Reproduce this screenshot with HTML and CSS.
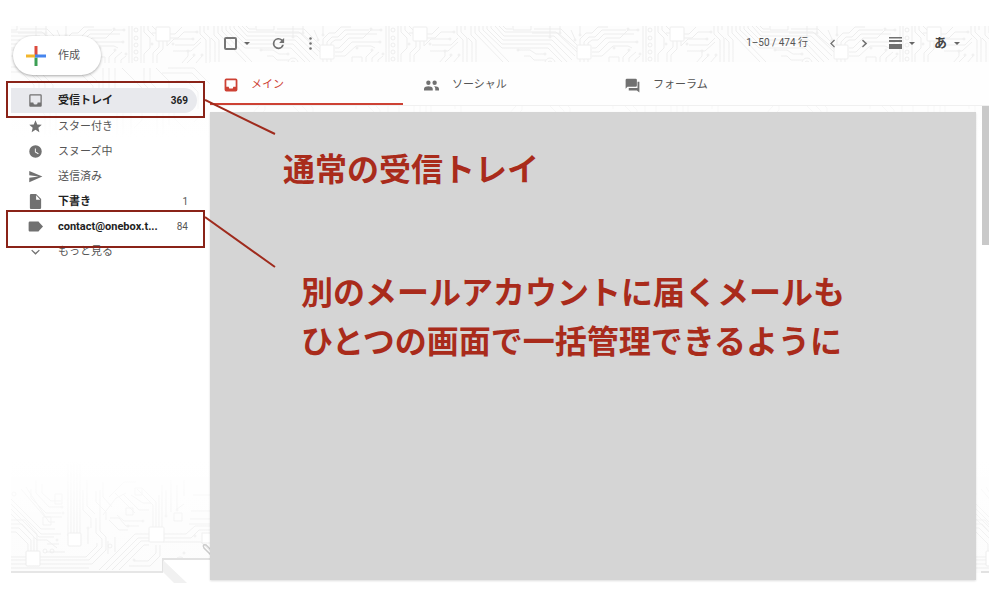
FILE: index.html
```
<!DOCTYPE html>
<html lang="ja">
<head>
<meta charset="utf-8">
<meta name="viewport" content="width=device-width, initial-scale=1">
<title>受信トレイ</title>
<link rel="stylesheet" href="styles.css">
</head>
<body>
<div class="app">
  <svg class="circuit circuit-top" aria-hidden="true">
    <defs>
      <pattern id="board" x="-57" y="0" width="257" height="112" patternUnits="userSpaceOnUse">
        <g fill="none" stroke="#ededed">
          <path d="M0 12 4 16V37M3 0V9L8 14V37M7 0V7L36 37M11 0V5L42 37M15 0V4L34 22H80L94 36M19 0V3L34 18H82L100 37M23 0V2L35 14H84L104 34M27 0 36 10H86L107 30M31 0 37 6H88L109 26M35 0 38 3H44M64 7H90L109 23M66 3H93L109 19"/>
          <path d="M112 19V13L118 7H124L130 1H140M116 19V16L121 11H127L134 4H158M120 19V17L124 14H130L136 8H166M124 22H128L138 12H152L160 4H169M124 26H131L141 16H168M124 30H134L145 20H160L164 22M112 33V37M116 33V37M120 33V37"/>
          <path d="M155 37V31L161 25M161 37V32L168 26M167 37V34L172 30M82 0V10M92 0V6M103 4 107 13M112 0V8M50 24H62L68 28H76M56 30H62L66 34H78"/>
          <path d="M175 0V37M178 0V37M187 0V37M190 0V6L196 12V22L190 28V37M194 0V4L200 10M198 0 202 4M202 7H198M209 15V23L203 29V37M213 15V20L220 13H238M216 12H224L230 6H242M216 8H221L228 1M205 15V21L199 27V37M221 19H240L247 12M219 25H237L247 16M228 37 234 30V26M233 37 240 30M242 37 248 30M246 0V8L252 14V37M250 0V6L256 12V37M254 0V4"/>
          <path d="M0 41H40L54 55V84L44 94V112M4 46H38L48 56V80L39 90V112M44 41H70L85 56V74L96 85V112M48 46H67L80 59V78L91 89V112M75 42 91 58V71L102 82V112M82 42 99 59V70L108 79M88 42H130L145 57V83M94 47H126L139 60V76M149 42V72L163 86V112M155 42V70L169 84V112M161 42V64L177 80V112M168 42 188 62V94L180 102M190 42V58L203 71V112M196 42V56L209 69V112M202 42 215 55V99M214 42H240L257 59M208 47H238L250 59V86L240 96M222 55H233L244 66V83M220 64V92L232 104"/>
          <g>
            <circle cx="82" cy="11" r="1"/><circle cx="92" cy="7" r="1"/><circle cx="107" cy="14" r="1"/><circle cx="112" cy="9" r="1"/><circle cx="77" cy="28" r="1"/><circle cx="50" cy="24" r="1"/><circle cx="160" cy="3" r="1"/><circle cx="170" cy="4" r="1"/><circle cx="169" cy="16" r="1"/><circle cx="146" cy="22" r="1"/><circle cx="161" cy="24" r="1"/><circle cx="172" cy="28" r="1"/><circle cx="198" cy="18" r="1"/><circle cx="219" cy="18" r="1"/><circle cx="239" cy="13" r="1"/><circle cx="243" cy="6" r="1"/><circle cx="234" cy="25" r="1"/><circle cx="240" cy="29" r="1"/><circle cx="248" cy="29" r="1"/>
            <circle cx="182" cy="4" r="2"/><circle cx="182" cy="12" r="2"/><circle cx="182" cy="19" r="2"/><circle cx="182" cy="26" r="2"/><circle cx="182" cy="33" r="2"/><circle cx="82" cy="37" r="5"/><circle cx="82" cy="37" r="2"/>
          </g>
          <path d="M45 0V4H63V0M141 37V31H151V37"/>
        </g>
        <g fill="#fff" stroke="#eee"><rect x="109" y="19" width="14" height="14" rx="1"/><rect x="202" y="1" width="14" height="14" rx="1"/></g>
      </pattern>
      <linearGradient id="fadeDown" x2="0" y2="1"><stop offset="0" stop-color="#fff" stop-opacity="0"/><stop offset=".4" stop-color="#fff" stop-opacity=".1"/><stop offset="1" stop-color="#fff"/></linearGradient>
    </defs>
    <rect width="100%" height="112" fill="#fdfdfd"/>
    <rect width="100%" height="112" fill="url(#board)"/>
    <rect width="100%" height="112" fill="url(#fadeDown)"/>
  </svg>
  <svg class="circuit circuit-bottom" aria-hidden="true">
    <defs>
      <linearGradient id="fadeUp" x2="0" y2="1"><stop offset="0" stop-color="#fff"/><stop offset=".65" stop-color="#fff" stop-opacity=".3"/><stop offset="1" stop-color="#fff" stop-opacity=".1"/></linearGradient>
      <pattern id="lower" width="960" height="120" patternUnits="userSpaceOnUse">
        <g fill="none" stroke="#ebebeb">
          <path d="M0 39 30 69H44M0 44 30 74H50M0 49 28 77H43M0 54 26 80H36L46 88M0 72H5L17 84V94M0 68H8L20 80V94M0 64H11L23 77V94M0 60H14L26 74V94M29 100H78L91 87V79L85 73V58M29 104H81L95 90V77L89 71V30M29 97H75L86 86V83M0 97H15M0 100H15M0 104H15M0 108H78M57 0V76M60 0V76M63 0V76M66 0V76M69 0V76M72 30V50L80 58V68M76 20V46L84 54"/>
          <path d="M138 74H124L88 110M138 78H127L95 110M138 81H130L101 110M138 85H133L108 110M142 70V45L126 29M145 70V42L131 28M148 70V35M151 70V25M152 74H175L184 66H199M152 78H180L188 70H199M152 82H190L199 91M145 85V93L137 101H123M149 85V96L139 106H118M20 29V38L35 53H50M25 20V33L38 47H50M31 24V33L40 41H50M10 29 34 57H51M15 27 38 62H44"/>
          <path d="M85 31V42L95 52V60M92 22V37L101 47M98 37 113 22H125M92 55 105 38 115 33M99 58H108L115 66H128M106 55 113 61H132M104 33 124 53M112 34 128 50H138M120 35 132 43H140M117 70H108L98 60M155 30V55M160 20V52M166 25V49L173 44M173 20V36M178 64H199M179 59H199M180 51H199M182 35H199M36 84H48M35 92H54M77 69V84M97 81V94M104 77V92"/>
          <circle cx="3" cy="34" r="2"/><circle cx="34" cy="91" r="2"/><circle cx="41" cy="91" r="2"/><circle cx="99" cy="86" r="2"/><circle cx="52" cy="53" r="1"/><circle cx="51" cy="47" r="1"/><circle cx="46" cy="80" r="1"/><circle cx="77" cy="68" r="1"/><circle cx="117" cy="66" r="1"/><circle cx="132" cy="61" r="1"/><circle cx="123" cy="100" r="1"/><circle cx="155" cy="56" r="1"/><circle cx="166" cy="50" r="1"/><circle cx="184" cy="76" r="1"/><circle cx="173" cy="93" r="1"/><circle cx="169" cy="102" r="5"/><circle cx="169" cy="102" r="2"/>
          <path d="M44 34h7v10h-7zM32 57h8v8h-8zM115 48h7v7h-7zM124 28h7v7h-7zM163 53h8v8h-8z"/>
        </g>
        <g fill="#fff" stroke="#eaeaea"><rect x="15" y="91" width="14" height="15" rx="1"/><rect x="57" y="73" width="13" height="13" rx="1"/><rect x="138" y="67" width="15" height="15" rx="1"/><rect x="191" y="73" width="14" height="10"/></g>
      </pattern>
    </defs>
    <rect width="100%" height="113" fill="#fcfcfc"/>
    <rect width="100%" height="113" fill="url(#lower)"/>
    <rect width="100%" height="113" fill="url(#fadeUp)"/>
    <path d="M0 112H152" stroke="#e6e6e6" stroke-width="2"/>
    <path d="M152 99H840V124H152z" fill="#fff"/>
    <path d="M152 112V99H200M970 112H980" fill="none" stroke="#e2e2e2" stroke-width="2"/>
    <path d="M152 100 176 123H163L152 112z" fill="#f1f1f1"/>
    <path d="M201 96 193 88Q191 84 195 85L203 93" fill="none" stroke="#ccc" stroke-width="1.500"/>
  </svg>

  <aside class="sidebar">
    <button class="compose" type="button">
      <svg width="20" height="20" viewBox="0 0 20 20" aria-hidden="true"><path fill="#dc4b3e" d="M8.500 0h3v9h-3z"/><path fill="#f2b62d" d="M0 8.500h9v3H0z"/><path fill="#4685ee" d="M11.500 8.500H20v3h-8.500z"/><path fill="#3c9f55" d="M8.500 11.500h3V20h-3z"/><path fill="#4685ee" d="M9 8.500h3v3H9z"/></svg>
      <span>作成</span>
    </button>
    <nav class="folders">
      <a class="folder selected" href="#"><svg class="icon" viewBox="0 0 24 24"><path d="M20 2H4a2 2 0 0 0-2 2v16c0 1.100.9 2 2 2h16a2 2 0 0 0 2-2V4a2 2 0 0 0-2-2zm0 13h-4.500a3.500 3.500 0 0 1-7 0H4V4h16z"/></svg><span class="name">受信トレイ</span><span class="count">369</span></a>
      <a class="folder" href="#"><svg class="icon" viewBox="0 0 24 24"><path d="m12 17.300 6.200 3.700-1.600-7L22 9.200l-7.200-.6L12 2 9.200 8.600 2 9.200 7.500 14l-1.700 7z"/></svg><span class="name">スター付き</span></a>
      <a class="folder" href="#"><svg class="icon" viewBox="0 0 24 24"><path d="M12 2a10 10 0 1 0 0 20 10 10 0 0 0 0-20zm4.200 14.200L11 13V7h1.500v5.200l4.500 2.700z"/></svg><span class="name">スヌーズ中</span></a>
      <a class="folder" href="#"><svg class="icon" viewBox="0 0 24 24"><path d="M2 21 23 12 2 3v7l15 2-15 2z"/></svg><span class="name">送信済み</span></a>
      <a class="folder unread" href="#"><svg class="icon" viewBox="0 0 24 24"><path d="M5 0a2 2 0 0 0-2 2v20c0 1.100.9 2 2 2h14a2 2 0 0 0 2-2V8l-8-8zm8 9V2l6.500 7z"/></svg><span class="name">下書き</span><span class="count">1</span></a>
      <a class="folder unread" href="#"><svg class="icon" viewBox="0 0 24 24"><path d="M18 5.500A2 2 0 0 0 16.200 4H3a2 2 0 0 0-2 2v12c0 1.100.9 2 2 2h13.200a2 2 0 0 0 1.800-1.500L24 12z"/></svg><span class="name">contact@onebox.t...</span><span class="count">84</span></a>
      <a class="folder" href="#"><svg class="icon" viewBox="0 0 24 24"><path d="m6.500 9 5.500 5 5.500-5 1.300 1.500L12 17l-6.800-6.500z"/></svg><span class="name">もっと見る</span></a>
    </nav>
    <span class="frame frame-inbox"></span>
    <span class="frame frame-account"></span>
  </aside>

  <main class="mail">
    <div class="toolbar">
      <label class="select-all"><input type="checkbox" aria-label="選択"><i class="caret"></i></label>
      <button type="button" class="tool reload" aria-label="更新"><svg class="icon" viewBox="0 0 24 24"><path d="M18.200 5.700A9 9 0 1 0 20.700 14h-2.800A6.300 6.300 0 1 1 12 5.700c1.700 0 3.200.7 4.300 1.900L13 11h8V3z"/></svg></button>
      <button type="button" class="tool" aria-label="その他"><svg class="icon" viewBox="0 0 24 24"><circle cx="12" cy="4" r="2"/><circle cx="12" cy="12" r="2"/><circle cx="12" cy="20" r="2"/></svg></button>
      <span class="range">1–50 / 474 行</span>
      <button type="button" class="tool prev" aria-label="前"><svg class="icon" viewBox="0 0 24 24"><path d="M16 7 14.500 5.500 8 12l6.500 6.500L16 17l-5-5z"/></svg></button>
      <button type="button" class="tool next" aria-label="次"><svg class="icon" viewBox="0 0 24 24"><path d="M8 7.400 9.400 5.500l7 6.500-7 6.500L8 16.600l4.800-4.600z"/></svg></button>
      <button type="button" class="tool density" aria-label="表示"><svg width="13" height="12" viewBox="0 0 13 12"><path d="M0 0h13v1.500H0zM0 3h13v2H0zM0 7h13v5H0z"/></svg><i class="caret"></i></button>
      <button type="button" class="tool lang"><span>あ</span><i class="caret"></i></button>
    </div>
    <div class="tabs">
      <a class="tab active" href="#"><svg class="icon" viewBox="0 0 24 24"><path d="M20 1H4a3 3 0 0 0-3 3v16a3 3 0 0 0 3 3h16a3 3 0 0 0 3-3V4a3 3 0 0 0-3-3zm0 14h-4l-1 3H9l-1-3H4V4h16z"/></svg><span>メイン</span></a>
      <a class="tab" href="#"><svg class="icon" viewBox="0 0 24 24"><path d="M17 11a3.500 3.500 0 1 0 0-7 3.500 3.500 0 0 0 0 7zM7 11a3.500 3.500 0 1 0 0-7 3.500 3.500 0 0 0 0 7zm0 2c-2.700 0-7 1.200-7 4v3h14v-3c0-2.800-4.300-4-7-4zm10 0-1 .1c1.200.8 2 2 2 3.900v3h6v-3c0-2.800-4.300-4-7-4z"/></svg><span>ソーシャル</span></a>
      <a class="tab" href="#"><svg class="icon" viewBox="0 0 24 24"><path d="M20 6h3v17l-4-3H6v-4h14zM17 1H3a2 2 0 0 0-2 2v14l3-3h13a2 2 0 0 0 2-2V3a2 2 0 0 0-2-2z"/></svg><span>フォーラム</span></a>
    </div>
    <div class="content">
      <section class="panel">
        <p class="note note-inbox">通常の受信トレイ</p>
        <p class="note note-account">別のメールアカウントに届くメールも<br>ひとつの画面で一括管理できるように</p>
      </section>
      <div class="scroll"><span class="thumb"></span></div>
    </div>
  </main>

  <svg class="leaders" width="72" height="170" viewBox="0 0 72 170" aria-hidden="true"><path d="M0 1 70 35M0 118 70 168" fill="none" stroke="#9f2b1d" stroke-width="2"/></svg>
</div>
</body>
</html>
```

FILE: styles.css
```
* { box-sizing: border-box; }

body {
  margin: 0;
  background: #fff;
  color: #555;
  font: 11px/16px Roboto, "Noto Sans CJK JP", sans-serif;
}

a { color: inherit; text-decoration: none; }

button {
  border: 0;
  padding: 0;
  background: none;
  color: inherit;
  font: inherit;
}

.app {
  position: relative;
  display: grid;
  grid-template-columns: 199px minmax(0, 1fr);
  min-height: 100vh;
  padding: 26px 11px 10px;
}

.circuit {
  position: absolute;
  left: 11px;
  width: calc(100% - 22px);
}

.circuit-top { top: 26px; height: 112px; }
.circuit-bottom { bottom: 7px; height: 123px; }

.icon {
  flex: none;
  width: 15px;
  height: 15px;
  fill: #717171;
}

.sidebar { position: relative; }

.compose {
  display: flex;
  align-items: center;
  gap: 12px;
  width: 88px;
  height: 39px;
  margin: 10px 0 0 2px;
  padding-left: 13px;
  border-radius: 20px;
  background: #fff;
  box-shadow: 0 1px 3px #0005;
}

.folders { margin-top: 13px; }

.folder {
  display: flex;
  align-items: center;
  height: 25px;
  margin-right: 13px;
  padding: 0 9px 0 17px;
  border-radius: 0 13px 13px 0;
}

.folder .name { margin-left: 15px; white-space: nowrap; }
.folder .count { margin-left: auto; font-size: 10px; }
.selected { margin-bottom: 1px; background: #e8e9ed; color: #222; font-weight: 700; }
.unread .name { color: #222; font-weight: 700; }

.frame {
  position: absolute;
  left: -5px;
  right: 5px;
  height: 38px;
  border: 2px solid #8a2318;
}

.frame-inbox { top: 55px; height: 37px; }
.frame-account { top: 184px; }

.leaders {
  position: absolute;
  left: 205px;
  top: 99px;
}

.mail {
  position: relative;
  display: flex;
  flex-direction: column;
  min-width: 0;
}

.toolbar {
  display: flex;
  align-items: center;
  height: 36px;
  padding: 0 29px 2px 14px;
}

.select-all { display: flex; align-items: center; gap: 7px; }

.select-all input {
  appearance: none;
  width: 13px;
  height: 13px;
  margin: 0;
  border: 2px solid #777;
  border-radius: 2px;
}

.caret {
  border: 3px solid transparent;
  border-top-color: #666;
  border-bottom: 0;
}

.tool { display: flex; align-items: center; fill: #717171; }
.reload { margin: 0 17px 0 21px; }
.range { margin-left: auto; font-size: 10px; }
.prev { margin-left: 17px; }
.next { margin-left: 17px; }
.density { gap: 7px; margin-left: 17px; }
.lang { gap: 7px; margin-left: 19px; color: #444; font-size: 13px; font-weight: 700; }

.tabs {
  display: grid;
  grid-template-columns: 200px 201px 1fr;
  height: 44px;
  background: #fefefe;
  border-bottom: 1px solid #f0f0f0;
}

.tab {
  display: flex;
  align-items: center;
  gap: 13px;
  padding: 5px 0 0 14px;
  border-bottom: 2px solid transparent;
}

.active {
  margin-right: 7px;
  border-color: #cd4134;
  border-radius: 0 2px 0 0;
  color: #cd4134;
}

.active .icon { width: 14px; height: 14px; fill: #cd4134; }

.content { display: flex; flex: 1; }

.panel {
  flex: 1;
  margin-top: 6px;
  padding: 31px 73px;
  background: #d5d5d5;
  box-shadow: 0 1px 2px #0002;
}

.note {
  margin: 0;
  color: #a92b1b;
  font: 700 32px/49px "Noto Sans CJK JP", sans-serif;
}

.note-account { margin: 74px -40px 0 18px; }

.scroll { width: 13px; padding-left: 6px; }

.thumb {
  display: block;
  height: 139px;
  background: #c9c9c9;
}
```
